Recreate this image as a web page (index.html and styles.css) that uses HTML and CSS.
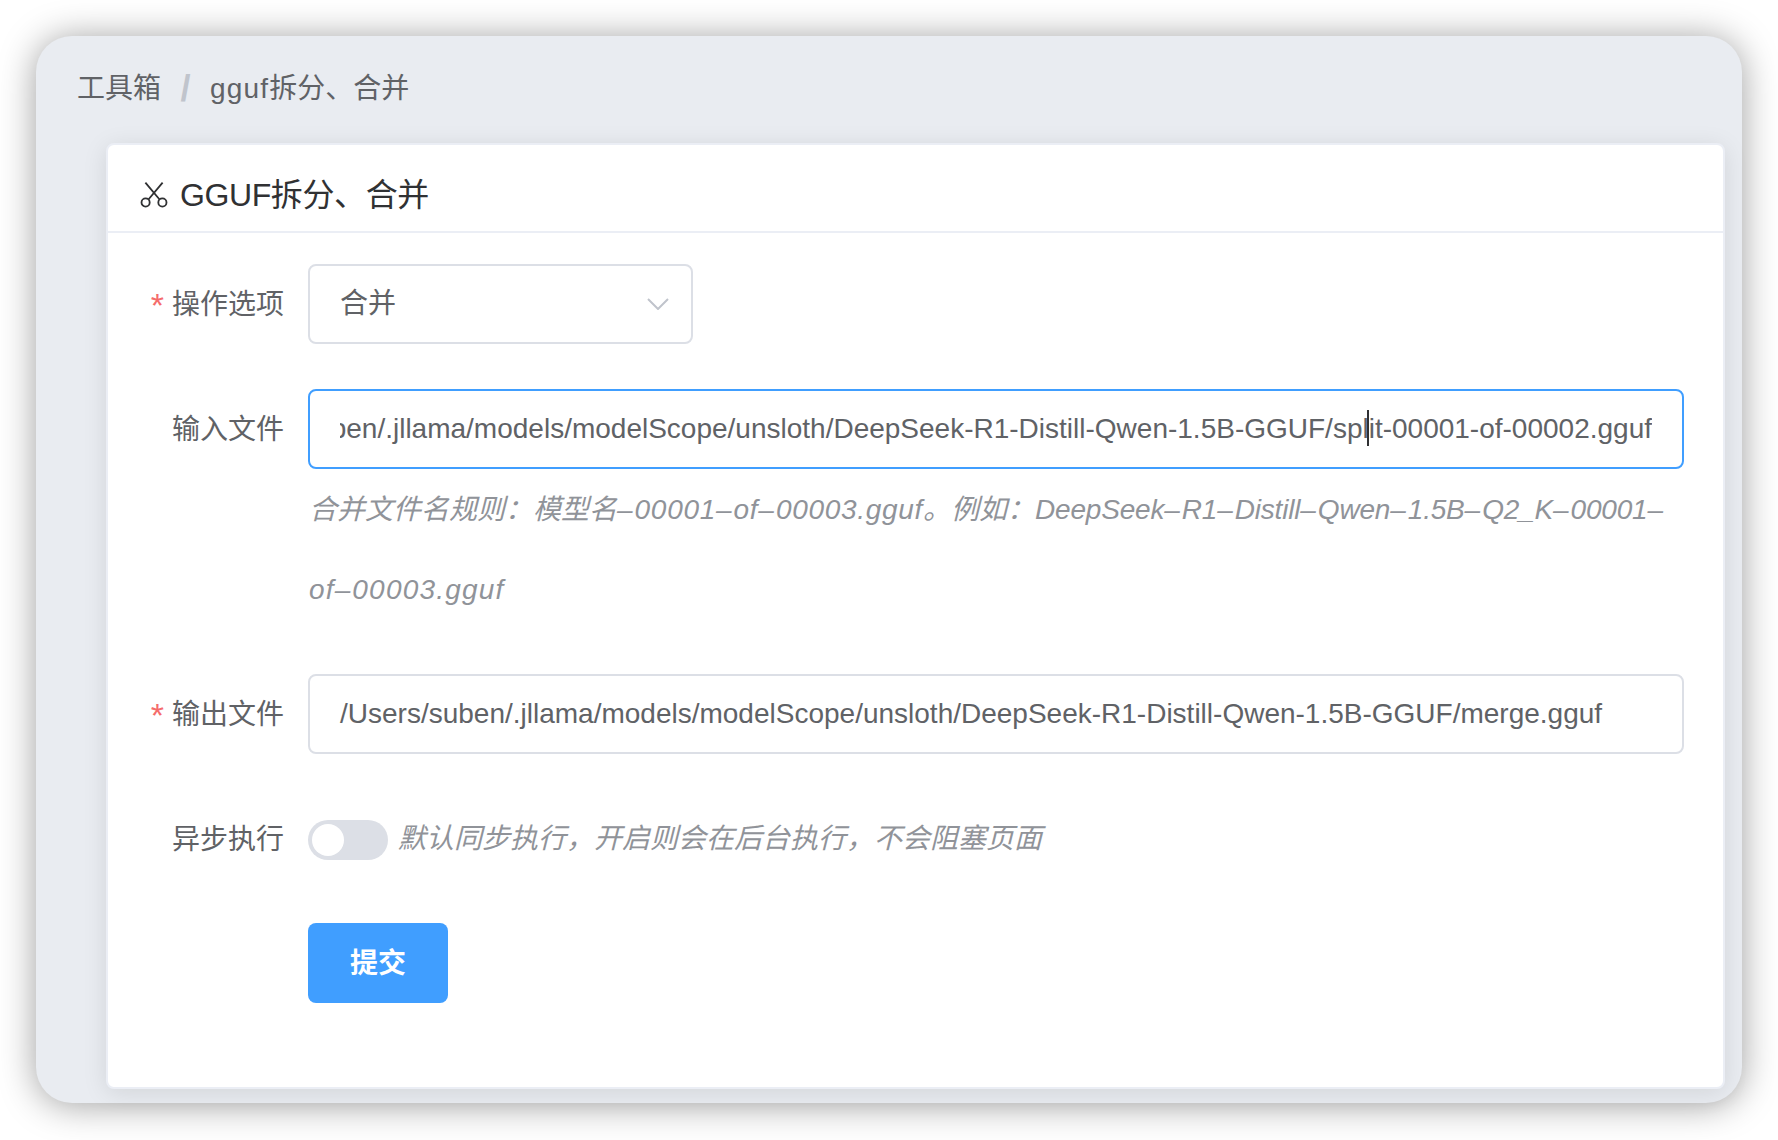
FILE: index.html
```html
<!DOCTYPE html>
<html lang="zh-CN">
<head>
<meta charset="utf-8">
<title>GGUF拆分、合并</title>
<link rel="stylesheet" href="styles.css">
</head>
<body>
<div class="window">
  <nav class="breadcrumb">
    <span>工具箱</span><span class="sep">/</span><span><span class="latin">gguf</span>拆分、合并</span>
  </nav>
  <section class="card">
    <header class="card-header">
      <svg class="scissors" viewBox="0 0 26 24" fill="none" stroke="currentColor" stroke-width="1.7">
        <circle cx="5.2" cy="19" r="3.8"/>
        <circle cx="20.8" cy="19" r="3.8"/>
        <path d="M7.8 16.2 21 .5M18.2 16.2 5 .5"/>
      </svg>
      <h1 class="title">GGUF拆分、合并</h1>
    </header>
    <form class="form">
      <div class="item wide">
        <label class="label"><span class="req">*</span>操作选项</label>
        <div class="control">
          <div class="box select">
            <span>合并</span>
            <svg class="chevron" viewBox="0 0 22 12" fill="none" stroke="currentColor" stroke-width="2"><path d="M1 1l10 10L21 1"/></svg>
          </div>
        </div>
      </div>
      <div class="item">
        <label class="label">输入文件</label>
        <div class="control">
          <div class="box focused"><span class="scrolled">/Users/suben/.jllama/models/modelScope/unsloth/DeepSeek-R1-Distill-Qwen-1.5B-GGUF/spl<span class="caret"></span>it-00001-of-00002.gguf</span></div>
          <p class="hint rule">合并文件名规则：模型名<span class="dash">–</span><span class="loose">00001<span class="dash">–</span>of<span class="dash">–</span>00003.gguf</span>。例如：<span class="tight">DeepSeek<span class="dash">–</span>R1<span class="dash">–</span>Distill<span class="dash">–</span>Qwen<span class="dash">–</span>1.5B<span class="dash">–</span>Q2_K<span class="dash">–</span>00001<span class="dash">–</span></span><span class="looser">of<span class="dash">–</span>00003.gguf</span></p>
        </div>
      </div>
      <div class="item tall">
        <label class="label"><span class="req">*</span>输出文件</label>
        <div class="control">
          <div class="box"><span>/Users/suben/.jllama/models/modelScope/unsloth/DeepSeek-R1-Distill-Qwen-1.5B-GGUF/merge.gguf</span></div>
        </div>
      </div>
      <div class="item">
        <label class="label">异步执行</label>
        <div class="control inline">
          <span class="switch"><span class="knob"></span></span>
          <span class="hint">默认同步执行，开启则会在后台执行，不会阻塞页面</span>
        </div>
      </div>
      <div class="item">
        <span class="label"></span>
        <div class="control">
          <button class="submit" type="button">提交</button>
        </div>
      </div>
    </form>
  </section>
</div>
</body>
</html>
```
FILE: styles.css
```css
* { box-sizing: border-box; }
html, body { margin: 0; height: 100%; background: #fff; overflow: hidden; }
body {
  padding: 36px;
  font-family: "Liberation Sans", "Noto Sans CJK SC", sans-serif;
  font-size: 28px;
  color: #606266;
}
.window {
  width: 1706px;
  height: 1067px;
  background: #e9ecf1;
  border-radius: 36px;
  box-shadow: 0 2px 36px rgba(0, 0, 0, .38);
  display: flex;
  flex-direction: column;
}
.breadcrumb {
  height: 107px;
  padding: 0 0 2px 41px;
  display: flex;
  align-items: center;
  line-height: 1;
}
.latin { letter-spacing: 1.2px; }
.sep { margin: 0 19.5px; color: #c0c4cc; font-weight: 700; font-size: 36px; }
.card {
  margin: 0 17px 14px 70px;
  flex: 1;
  background: #fff;
  border: 2px solid #ebeef5;
  border-radius: 8px;
  box-shadow: 0 4px 24px rgba(0, 0, 0, .1);
  overflow: hidden;
}
.card-header {
  height: 88px;
  padding: 14px 32px 0 32px;
  border-bottom: 2px solid #ebeef5;
  display: flex;
  align-items: center;
  gap: 12px;
  color: #303133;
}
.scissors { width: 28px; height: 26px; }
.title { margin: 0; font-size: 32px; font-weight: 400; line-height: 1; letter-spacing: -.4px; }
.form { padding: 31px 39px 0 42px; }
.item { display: flex; margin-bottom: 44px; }
.wide { margin-bottom: 45px; }
.tall { margin-bottom: 45px; }
.label {
  flex: none;
  width: 158px;
  height: 80px;
  padding: 1px 24px 0 0;
  line-height: 80px;
  text-align: right;
  white-space: nowrap;
}
.req {
  color: #f56c6c;
  margin-right: 8px;
  font-size: 34px;
  line-height: 0;
  vertical-align: -3px;
}
.control { flex: 1; min-width: 0; line-height: 80px; }
.inline { display: flex; align-items: center; gap: 10px; }
.box {
  height: 80px;
  padding: 0 30px;
  background: #fff;
  border: 2px solid #dcdfe6;
  border-radius: 8px;
  display: flex;
  align-items: center;
  white-space: nowrap;
  overflow: hidden;
  line-height: 1;
}
.focused { border-color: #409eff; justify-content: flex-end; }
.scrolled { flex: none; clip-path: inset(-10px 0 -10px calc(100% - 1312px)); }
.caret { display: inline-block; position: relative; width: 0; height: 0; }
.caret::after {
  content: "";
  position: absolute;
  left: -2px;
  top: -28px;
  width: 2px;
  height: 36px;
  background: #303133;
}
.select { width: 385px; padding-right: 22px; justify-content: space-between; }
.chevron { width: 22px; height: 12px; color: #c0c4cc; }
.hint { margin: 0; color: #909399; font-style: italic; }
.rule { padding: 1px 0 0 1px; }
.dash { letter-spacing: 2px; }
.loose { letter-spacing: .7px; }
.tight { letter-spacing: -.2px; }
.looser { letter-spacing: 1.2px; }
.switch {
  flex: none;
  position: relative;
  top: 1px;
  width: 80px;
  height: 40px;
  padding: 4px;
  background: #dcdfe6;
  border-radius: 20px;
  display: flex;
}
.knob { width: 32px; height: 32px; background: #fff; border-radius: 50%; }
.submit {
  display: block;
  width: 140px;
  height: 80px;
  padding: 0 0 4px;
  border: 0;
  border-radius: 8px;
  background: #409eff;
  color: #fff;
  font: 700 28px "Liberation Sans", "Noto Sans CJK SC", sans-serif;
}
```
